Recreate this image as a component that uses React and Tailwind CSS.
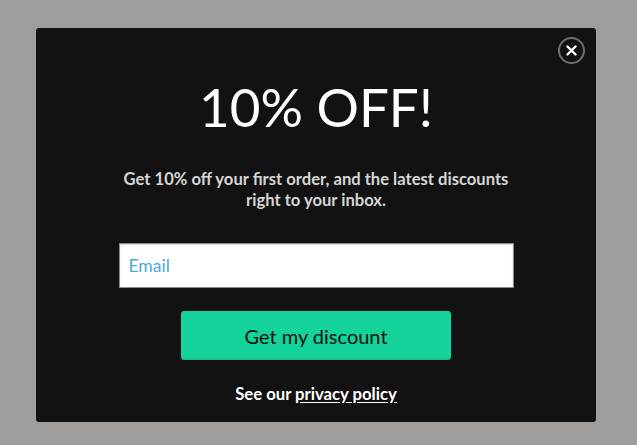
import React from 'react';

// Discount signup popup over a dimmed page
function CloseButton() {
  return (
    <button
      type="button"
      aria-label="Close"
      className="absolute top-[9px] right-[11px] flex h-[27px] w-[27px] items-center justify-center rounded-full border-2 border-[#6f6f6f] bg-[#121212]"
    >
      <svg width="11" height="11" viewBox="0 0 11 11" fill="none">
        <path d="M1.5 1.5L9.5 9.5M9.5 1.5L1.5 9.5" stroke="#fff" strokeWidth="2.4" strokeLinecap="round" />
      </svg>
    </button>
  );
}

export default function App() {
  return (
    <div
      className="min-h-[445px] w-full bg-[#a09d9a] pt-[28px] pl-[36px]"
      style={{ fontFamily: 'Lato, "Open Sans", sans-serif' }}
    >
      <div className="relative flex h-[394px] w-[560px] flex-col items-center rounded-[3px] bg-[#121212] pt-[52px]">
        <CloseButton />

        <h1 className="text-[53px] font-normal leading-none text-white">10% OFF!</h1>

        <p className="mt-[36px] w-[410px] text-center text-[16.6px] font-bold leading-[21px] text-[#d6d6d6]">
          Get 10% off your first order, and the latest discounts right to your inbox.
        </p>

        <input
          type="email"
          placeholder="Email"
          className="mt-[32px] h-[45px] w-[395px] border border-[#8a8a8a] bg-white px-[9px] text-[17.5px] text-[#333] shadow-[inset_0_1px_2px_rgba(0,0,0,0.15)] outline-none placeholder:text-[#4ba9da]"
        />

        <button
          type="button"
          className="mt-[23px] h-[49px] w-[270px] rounded-[3px] bg-[#14d39a] text-[20px] font-normal text-[#111] shadow-[inset_0_-2px_0_rgba(0,0,0,0.08)]"
        >
          Get my discount
        </button>

        <p className="mt-[22px] text-[16.7px] font-bold leading-[24px] text-white">
          See our <a href="#" className="underline underline-offset-2">privacy policy</a>
        </p>
      </div>
    </div>
  );
}
